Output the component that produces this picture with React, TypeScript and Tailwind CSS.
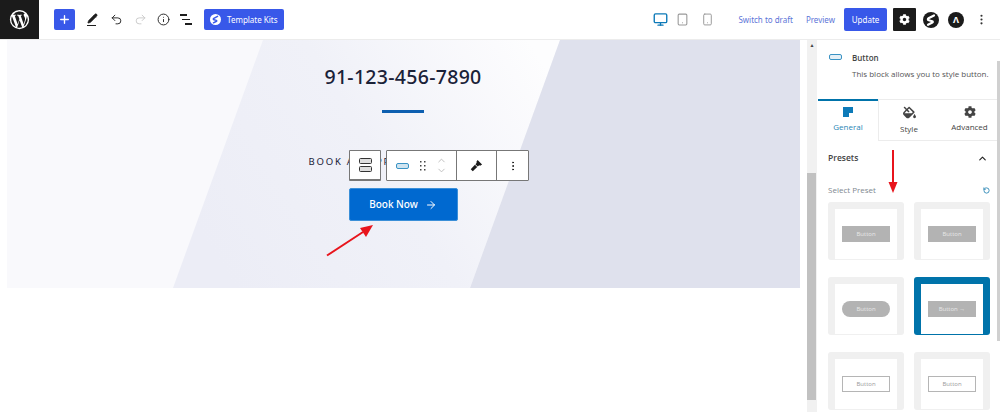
import { Monitor, Tablet, Smartphone, Undo2, Redo2, Info, MoreVertical, Plus, Pencil, ChevronUp, ChevronDown, ArrowRight, RotateCcw } from "lucide-react";
import { FaCog, FaFillDrip } from "react-icons/fa";

const SLogo = ({ size, bg, fg }: { size: number; bg: string; fg: string }) => (
  <svg width={size} height={size} viewBox="0 0 16 16">
    <circle cx="8" cy="8" r="8" fill={bg} />
    <path d="M11 3.500 5.500 6.300c-.9.500-.8 1.700.2 2l3.600 1c.6.200.7.900.1 1.200L5 12.800" fill="none" stroke={fg} strokeWidth="2.200" strokeLinecap="round" strokeLinejoin="round" />
  </svg>
);

const Preset = ({ kind, selected }: { kind: string; selected?: boolean }) => (
  <div className={`h-[58px] rounded-[3px] px-[7px] pt-[7px] ${selected ? "bg-[#0073aa]" : "bg-[#f0f0f0]"}`}>
    <div className="h-[50px] bg-white flex justify-center pt-[17px]">
      <div
        className={`w-[48px] h-[16px] flex items-center justify-center text-[6px] ${
          kind === "outline"
            ? "border border-[#b5b5b5] text-[#999]"
            : "bg-[#b3b3b3] text-[#e8e8e8]"
        } ${kind === "pill" ? "rounded-full" : ""}`}
      >
        {kind === "arrow" ? "Button →" : "Button"}
      </div>
    </div>
  </div>
);

export default function App() {
  return (
    <div className="w-[1000px] h-[412px] overflow-hidden bg-white flex flex-col font-['Noto_Sans',sans-serif] text-[#1e1e1e]">
      <header className="h-[40px] flex items-center border-b border-[#ececec] shrink-0">
        <div className="w-[39px] h-[39px] bg-[#1b1b1b] flex items-center justify-center shrink-0">
          <svg width="21" height="21" viewBox="0 0 24 24" fill="#fff">
            <path d="M12 1a11 11 0 1 0 0 22 11 11 0 0 0 0-22zM2.600 12c0-1.400.3-2.700.8-3.800l4.500 12.300A9.400 9.400 0 0 1 2.600 12zm9.400 9.400c-.9 0-1.800-.1-2.700-.4l2.800-8.200 2.900 8c0 .1 0 .1.100.1-.9.300-2 .5-3.100.5zm1.300-13.800c.6 0 1.100-.1 1.100-.1.500-.1.500-.8 0-.8 0 0-1.500.1-2.500.1-.9 0-2.400-.1-2.400-.1-.5 0-.6.800 0 .8 0 0 .5.100 1 .1l1.400 3.900-2 6L6.600 7.600c.6 0 1.100-.1 1.100-.1.500-.1.500-.8 0-.8 0 0-1.500.1-2.500.1h-.6A9.400 9.400 0 0 1 18.400 5h-.1c-.9 0-1.600.8-1.600 1.700 0 .8.500 1.400.9 2.200.4.600.8 1.400.8 2.500 0 .8-.3 1.700-.7 3l-.9 3.100-3.500-10zm3.400 12.500 2.900-8.300c.5-1.300.7-2.400.7-3.300 0-.3 0-.6-.1-.9A9.400 9.400 0 0 1 16.700 20.100z" />
          </svg>
        </div>
        <button className="ml-[15px] w-[21px] h-[21px] rounded-[2px] bg-[#3858e9] flex items-center justify-center">
          <Plus size={13} color="#fff" strokeWidth={2.5} />
        </button>
        <div className="ml-[10px] w-[14px] flex flex-col items-center">
          <Pencil size={11} fill="#1e1e1e" strokeWidth={1.5} />
          <div className="w-[9px] h-[1.5px] bg-[#1e1e1e] mt-[1px] -ml-[2px]" />
        </div>
        <Undo2 size={13} className="ml-[11px]" strokeWidth={1.7} />
        <Redo2 size={13} className="ml-[11px] text-[#c8c8c8]" strokeWidth={1.7} />
        <Info size={13} className="ml-[10px]" strokeWidth={1.7} />
        <div className="ml-[10px] w-[12px] flex flex-col gap-[3px]">
          <div className="w-[7px] h-[1.5px] bg-[#1e1e1e]" />
          <div className="w-[8px] h-[1.5px] bg-[#1e1e1e] ml-[2px]" />
          <div className="w-[7px] h-[1.5px] bg-[#1e1e1e] ml-[5px]" />
        </div>
        <button className="ml-[12px] w-[80px] h-[21px] rounded-[2px] bg-[#3858e9] flex items-center pl-[6px] gap-[6px] text-white text-[8px]">
          <SLogo size={11} bg="#fff" fg="#3858e9" />
          Template Kits
        </button>
        <div className="flex-1" />
        <Monitor size={15} className="text-[#0d7ab8]" strokeWidth={2.2} />
        <Tablet size={13} className="ml-[8px] text-[#999]" strokeWidth={2} />
        <Smartphone size={13} className="ml-[12px] text-[#999]" strokeWidth={1.8} />
        <span className="ml-[24px] text-[8px] text-[#5d75d8]">Switch to draft</span>
        <span className="ml-[13px] text-[8px] text-[#5d75d8]">Preview</span>
        <button className="ml-[9px] w-[43px] h-[23px] rounded-[2px] bg-[#3858e9] text-white text-[8px]">Update</button>
        <div className="ml-[6px] w-[23px] h-[23px] bg-[#1b1b1b] rounded-[1px] flex items-center justify-center">
          <FaCog size={11} color="#fff" />
        </div>
        <div className="ml-[7px]"><SLogo size={16} bg="#1b1b1b" fg="#fff" /></div>
        <div className="ml-[9px] w-[16px] h-[16px] rounded-full bg-[#1b1b1b] text-white text-[9px] font-bold flex items-center justify-center">Λ</div>
        <MoreVertical size={13} className="ml-[11px] mr-[12px] text-[#333]" />
      </header>

      <div className="flex-1 flex min-h-0">
        <main className="w-[807px] pl-[7px] shrink-0">
          <section className="relative h-[248px] w-[793px] bg-[#f9f9fc] overflow-hidden flex flex-col items-center">
            <svg className="absolute inset-0" width="793" height="248" viewBox="0 0 793 248">
              <defs>
                <linearGradient id="band" x1="0" y1="0.6" x2="1" y2="0.2">
                  <stop offset="0" stopColor="#ecedf6" />
                  <stop offset="0.5" stopColor="#f0f1f8" />
                  <stop offset="1" stopColor="#fdfdfe" />
                </linearGradient>
              </defs>
              <polygon points="256,0 553,0 463,248 166,248" fill="url(#band)" />
              <polygon points="553,0 793,0 793,248 463,248" fill="#dfe1ed" />
            </svg>
            <h2 className="relative mt-[25px] mr-[1px] text-[19.500px] leading-[24px] font-medium tracking-[0.3px] text-[#1a2238]">91-123-456-7890</h2>
            <div className="relative mt-[21px] mr-[2px] w-[42px] h-[3px] bg-[#0d5fb0]" />
            <p className="relative mt-[41px] text-[9.500px] leading-[15px] tracking-[1.8px] text-[#1a2238] w-[190px] whitespace-nowrap">BOOK AN APPOINTMENT</p>
            <button className="relative mt-[19px] mr-[1px] w-[109px] h-[33px] rounded-[2px] bg-[#0069d0] text-white text-[10px] font-medium flex items-center justify-center gap-[7px] border border-[#3b8fd8]">
              Book Now <ArrowRight size={12} />
            </button>

            <div className="absolute left-[342px] top-[110px] flex">
              <div className="w-[32px] h-[31px] bg-white border border-[#777] border-b-2 rounded-[1px] flex flex-col items-center justify-center gap-[2px]">
                <div className="w-[13px] h-[6px] rounded-[1.5px] border border-[#333] bg-[#ddd]" />
                <div className="w-[13px] h-[6px] rounded-[1.5px] border border-[#333] bg-[#ddd]" />
              </div>
              <div className="ml-[5px] h-[31px] bg-white border border-[#777] rounded-[1px] flex">
                <div className="w-[70px] flex items-center pl-[9px] border-r border-[#777]">
                  <div className="w-[13px] h-[6px] rounded-[2px] border-[1.5px] border-[#3a93c4] bg-[#cfe4f0]" />
                  <svg className="ml-[11px]" width="6" height="10" viewBox="0 0 6 10" fill="#444">
                    <rect x="0" y="0" width="1.500" height="1.500" />
                    <rect x="4" y="0" width="1.500" height="1.500" />
                    <rect x="0" y="4" width="1.500" height="1.500" />
                    <rect x="4" y="4" width="1.500" height="1.500" />
                    <rect x="0" y="8" width="1.500" height="1.500" />
                    <rect x="4" y="8" width="1.500" height="1.500" />
                  </svg>
                  <div className="ml-[10px] flex flex-col text-[#bbb]">
                    <ChevronUp size={11} className="-mb-[1px]" />
                    <ChevronDown size={11} />
                  </div>
                </div>
                <div className="w-[40px] flex items-center justify-center border-r border-[#777]">
                  <svg width="13" height="13" viewBox="0 0 14 14" fill="#1b1b1b">
                    <path d="M8.200 1 13 5.800l-2.100 1.400-1-.5-1.500 1.500-2.600-2.600L7.300 4.100l-.5-1z" />
                    <path d="M5.300 6.200 7.800 8.700 3 13.300 .8 11z" />
                  </svg>
                </div>
                <div className="w-[31px] flex items-center justify-center">
                  <MoreVertical size={12} />
                </div>
              </div>
            </div>

            <svg className="absolute left-[310px] top-[175px]" width="70" height="50" viewBox="0 0 70 50">
              <line x1="10" y1="40.500" x2="46" y2="17" stroke="#e8141c" strokeWidth="2" />
              <polygon points="56,10 43,13 49,22" fill="#e8141c" />
            </svg>
          </section>
        </main>

        <div className="w-[10px] bg-[#f1f1f1] shrink-0 flex flex-col items-center">
          <div className="text-[5px] text-[#444] h-[133px] pt-[2px]">▲</div>
          <div className="w-[9px] mr-[1px] h-[227px] bg-[#c1c1c1]" />
        </div>

        <aside className="relative w-[183px] shrink-0 bg-white font-['Open_Sans',sans-serif] text-[#444]">
          <div className="flex pt-[11px] pl-[12px] h-[59px]">
            <div className="mt-[3px] w-[13px] h-[6px] rounded-[2px] border-[1.5px] border-[#3a93c4] bg-[#e5f0f7] shrink-0" />
            <div className="ml-[10px]">
              <div className="text-[8px] leading-[14px] font-semibold">Button</div>
              <div className="mt-[2px] text-[8px] leading-[14px] whitespace-nowrap text-[#555]">This block allows you to style button.</div>
            </div>
          </div>
          <div className="flex h-[42px] text-[8px] ml-[1px]">
            <div className="w-[60px] border-t-2 border-[#0073aa] flex flex-col items-center pt-[6px] text-[#2a86b5]">
              <div className="w-[10px] h-[10px] bg-[#0d7ab8] mb-[4px] flex items-end justify-end"><div className="w-[4px] h-[4px] bg-white" /></div>
              General
            </div>
            <div className="w-[61px] border-l border-b border-t border-[#ececec] flex flex-col items-center pt-[6px]">
              <FaFillDrip size={13} color="#444" className="mb-[4px]" />
              Style
            </div>
            <div className="flex-1 border-b border-t border-[#ececec] flex flex-col items-center pt-[6px]">
              <FaCog size={12} color="#444" className="mb-[3px]" />
              Advanced
            </div>
          </div>
          <div className="px-[11px]">
            <div className="h-[34px] flex items-center justify-between text-[8.500px] font-semibold pr-[1px]">
              Presets
              <ChevronUp size={11} strokeWidth={2.5} className="text-[#222]" />
            </div>
            <div className="h-[14px] mt-[8px] flex items-center justify-between text-[8px] text-[#808890]">
              Select Preset
              <RotateCcw size={7} className="text-[#2a86b5] -mr-[1px]" strokeWidth={3} />
            </div>
            <div className="mt-[5px] grid grid-cols-2 gap-x-[10px] gap-y-[17px] w-[162px]">
              <Preset kind="solid" />
              <Preset kind="solid" />
              <Preset kind="pill" />
              <Preset kind="arrow" selected />
              <Preset kind="outline" />
              <Preset kind="outline" />
            </div>
          </div>

          <svg className="absolute left-[70px] top-[110px]" width="12" height="46" viewBox="0 0 12 46">
            <line x1="6" y1="0" x2="6" y2="33" stroke="#e8141c" strokeWidth="2" />
            <polygon points="1.500,32 10.500,32 6,43" fill="#e8141c" />
          </svg>
          <div className="absolute right-0 top-[21px] w-[3px] h-[280px] bg-[#d0d0d0]" />
        </aside>
      </div>
    </div>
  );
}
